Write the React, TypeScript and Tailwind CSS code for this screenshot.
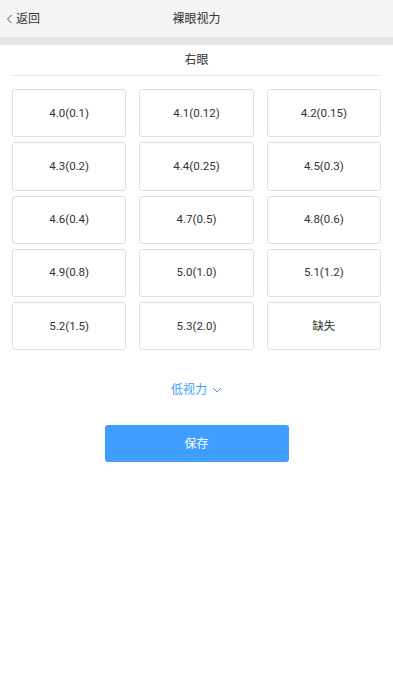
import React from 'react'

const options = [
  '4.0(0.1)', '4.1(0.12)', '4.2(0.15)',
  '4.3(0.2)', '4.4(0.25)', '4.5(0.3)',
  '4.6(0.4)', '4.7(0.5)', '4.8(0.6)',
  '4.9(0.8)', '5.0(1.0)', '5.1(1.2)',
  '5.2(1.5)', '5.3(2.0)', '缺失',
]

const font = { fontFamily: 'Roboto, "Noto Sans CJK SC", sans-serif' }

export default function App() {
  return (
    <div className="w-[393px] h-[700px] bg-white text-[#333]" style={font}>
      <div className="relative h-[37px] bg-[#f4f4f4] flex items-center justify-center">
        <div className="absolute left-[6px] top-0 h-full flex items-center gap-[2px] text-[12px] text-[#333]">
          <svg width="8" height="10" viewBox="0 0 8 10" fill="none">
            <path d="M5.5 1 L1.5 5 L5.5 9" stroke="#555" strokeWidth="1" />
          </svg>
          <span>返回</span>
        </div>
        <span className="text-[12px]">裸眼视力</span>
      </div>
      <div className="h-[8px] bg-[#e5e5e5]" />
      <div className="mx-[12px] h-[31px] flex items-center justify-center border-b border-[#e6e6e6] text-[12px]">
        右眼
      </div>
      <div className="grid grid-cols-3 gap-x-[13px] gap-y-[5px] px-[12px] pt-[13px]">
        {options.map((o) => (
          <button
            key={o}
            className="h-[48.3px] rounded-[3px] border border-[#dcdfe6] bg-white text-[11.5px] text-[#333] flex items-center justify-center"
          >
            {o}
          </button>
        ))}
      </div>
      <div className="mt-[31px] flex items-center justify-center gap-[5px] text-[12px] text-[#409eff]">
        <span>低视力</span>
        <svg width="10" height="6" viewBox="0 0 10 6" fill="none">
          <path d="M1 1 L5 5 L9 1" stroke="#409eff" strokeWidth="1" />
        </svg>
      </div>
      <div className="mt-[26px] flex justify-center">
        <button className="w-[184px] h-[37px] rounded-[3px] bg-[#409eff] text-white text-[12px]">保存</button>
      </div>
    </div>
  )
}
